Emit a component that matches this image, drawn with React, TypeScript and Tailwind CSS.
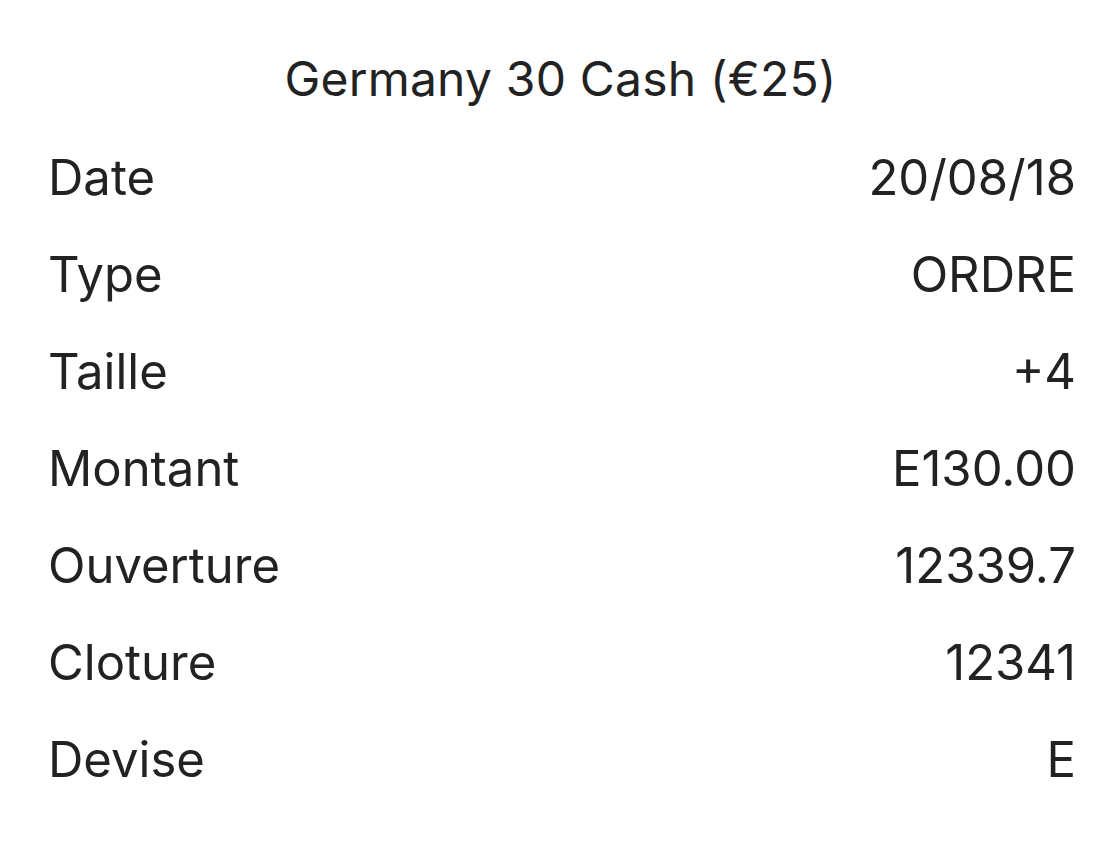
const rows: [string, string][] = [
  ["Date", "20/08/18"],
  ["Type", "ORDRE"],
  ["Taille", "+4"],
  ["Montant", "E130.00"],
  ["Ouverture", "12339.7"],
  ["Cloture", "12341"],
  ["Devise", "E"],
];

export default function App() {
  return (
    <div className="min-h-[867px] w-[1109px] bg-white font-['Inter','Noto_Sans',sans-serif] text-[#222222]">
      <h1 className="pt-[51px] pl-[12px] text-center text-[48px] leading-[56px] font-normal tracking-[0.2px]">
        Germany 30 Cash (€25)
      </h1>
      <div className="mt-[22px] flex flex-col pl-[48px] pr-[33px]">
        {rows.map(([label, value]) => (
          <div
            key={label}
            className="flex h-[97px] items-center justify-between text-[49px] leading-none"
          >
            <span>{label}</span>
            <span>{value}</span>
          </div>
        ))}
      </div>
    </div>
  );
}
